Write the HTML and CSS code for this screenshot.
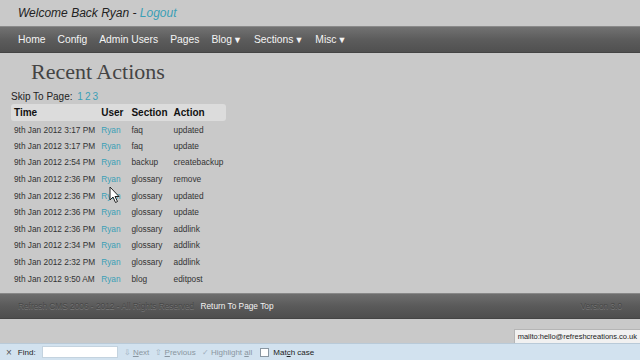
FILE: index.html
```html
<!DOCTYPE html>
<html lang="en">
<head>
    <meta charset="UTF-8">
    <meta name="viewport" content="width=device-width, initial-scale=1.0">
    <title>Refresh CMS - Recent Actions</title>
    <link rel="stylesheet" href="styles.css">
</head>

<body>
    <!-- top welcome line -->
    <div class="welcome">Welcome Back Ryan - <a href="#">Logout</a></div>

    <!-- main menu -->
    <div class="nav">
        <a href="#">Home</a>
        <a href="#">Config</a>
        <a href="#">Admin Users</a>
        <a href="#">Pages</a>
        <a href="#">Blog<span class="arrow">▼</span></a>
        <a href="#">Sections<span class="arrow">▼</span></a>
        <a href="#">Misc<span class="arrow">▼</span></a>
    </div>

    <div class="main">
        <h1>Recent Actions</h1>
        <div class="pager">Skip To Page: <a href="#">1</a><a href="#">2</a><a href="#">3</a></div>

        <table class="actions">
            <tr class="head">
                <th>Time</th>
                <th>User</th>
                <th>Section</th>
                <th>Action</th>
            </tr>
            <tr><td>9th Jan 2012 3:17 PM</td><td><a href="#">Ryan</a></td><td>faq</td><td>updated</td></tr>
            <tr><td>9th Jan 2012 3:17 PM</td><td><a href="#">Ryan</a></td><td>faq</td><td>update</td></tr>
            <tr><td>9th Jan 2012 2:54 PM</td><td><a href="#">Ryan</a></td><td>backup</td><td>createbackup</td></tr>
            <tr><td>9th Jan 2012 2:36 PM</td><td><a href="#">Ryan</a></td><td>glossary</td><td>remove</td></tr>
            <tr><td>9th Jan 2012 2:36 PM</td><td><a href="#">Ryan</a></td><td>glossary</td><td>updated</td></tr>
            <tr><td>9th Jan 2012 2:36 PM</td><td><a href="#">Ryan</a></td><td>glossary</td><td>update</td></tr>
            <tr><td>9th Jan 2012 2:36 PM</td><td><a href="#">Ryan</a></td><td>glossary</td><td>addlink</td></tr>
            <tr><td>9th Jan 2012 2:34 PM</td><td><a href="#">Ryan</a></td><td>glossary</td><td>addlink</td></tr>
            <tr><td>9th Jan 2012 2:32 PM</td><td><a href="#">Ryan</a></td><td>glossary</td><td>addlink</td></tr>
            <tr><td>9th Jan 2012 9:50 AM</td><td><a href="#">Ryan</a></td><td>blog</td><td>editpost</td></tr>
        </table>
    </div>

    <!-- footer -->
    <div class="footer">
        <div class="left">Refresh CMS 2006 - 2012 - All Rights Reserved <a href="#">Return To Page Top</a></div>
        <div class="version">Version 3.0</div>
    </div>

    <!-- browser status + find bar -->
    <div class="status">mailto:hello@refreshcreations.co.uk</div>
    <div class="findbar">
        <span class="close">×</span>
        <span class="label">Find:</span>
        <span class="field"></span>
        <span class="btn"><span class="ico">⇩</span> <u>N</u>ext</span>
        <span class="btn"><span class="ico">⇧</span> <u>P</u>revious</span>
        <span class="btn"><span class="ico">✓</span> Highlight <u>a</u>ll</span>
        <span class="check"></span>
        <span class="match">Mat<u>c</u>h case</span>
    </div>

    <svg class="cursor" width="12" height="18" viewBox="0 0 12 18">
        <path d="M1 1 L1 14 L4 11 L6.5 16.5 L8.5 15.5 L6 10.5 L10 10.5 Z" fill="#fff" stroke="#222" stroke-width="1"/>
    </svg>
</body>
</html>
```

FILE: styles.css
```css
* {
    margin: 0;
    padding: 0;
    box-sizing: border-box;
}

body {
    font-family: "Liberation Sans", Arial, sans-serif;
    background: #c9c9c9;
    color: #333;
    width: 640px;
    height: 360px;
    overflow: hidden;
    position: relative;
}

a {
    color: #3a9fb6;
    text-decoration: none;
}

/* welcome line */
.welcome {
    height: 26px;
    line-height: 26px;
    padding-left: 18px;
    font-size: 12px;
    font-style: italic;
    color: #222;
}

/* menu bar */
.nav {
    height: 27px;
    display: flex;
    align-items: center;
    gap: 12px;
    padding-left: 18px;
    background: linear-gradient(#727272, #5c5c5c 50%, #505050);
    border-top: 1px solid #8a8a8a;
    border-bottom: 1px solid #444;
}

.nav a {
    color: #f4f4f4;
    font-size: 10.3px;
}

.nav .arrow {
    font-size: 9px;
    margin-left: 1px;
}

/* content */
.main {
    padding-left: 11px;
}

.main h1 {
    font-family: "Liberation Serif", "Times New Roman", serif;
    font-weight: normal;
    font-size: 22px;
    color: #444;
    margin-left: 20px;
    line-height: 26px;
    padding-top: 6px;
}

.pager {
    font-size: 10px;
    color: #222;
    margin-top: 5px;
    line-height: 14px;
}

.pager a {
    margin-left: 2px;
}

.actions {
    border-collapse: collapse;
}

.actions th {
    text-align: left;
    font-size: 10px;
    font-weight: bold;
    color: #111;
    height: 17px;
    padding: 0 3px;
    background: #dcdcdc;
}

.actions th:first-child {
    border-radius: 3px 0 0 3px;
}

.actions th:last-child {
    border-radius: 0 3px 3px 0;
    padding-right: 6px;
}

.actions td {
    font-size: 8.3px;
    color: #333;
    height: 16.6px;
    padding: 0 3px;
    white-space: nowrap;
}

.actions th:nth-child(2),
.actions td:nth-child(2) {
    padding-right: 5px;
}

.actions tr:nth-child(2) td {
    padding-top: 2px;
}

/* footer */
.footer {
    height: 26px;
    margin-top: 6px;
    display: flex;
    align-items: center;
    justify-content: space-between;
    padding: 0 18px;
    background: linear-gradient(#6e6e6e, #5a5a5a 50%, #4e4e4e);
    border-top: 1px solid #888;
    border-bottom: 1px solid #444;
    font-size: 8.3px;
    color: #484848;
    text-shadow: 0 1px 0 #777;
}

.footer a {
    color: #f2f2f2;
    margin-left: 4px;
    text-shadow: none;
}

/* browser chrome overlays */
.status {
    position: absolute;
    right: 0;
    bottom: 17px;
    height: 14px;
    line-height: 13px;
    padding: 0 3px;
    font-size: 7.5px;
    color: #222;
    background: #f1f1f1;
    border: 1px solid #b5b5b5;
    border-right: none;
    border-bottom: none;
}

.findbar {
    position: absolute;
    left: 0;
    bottom: 0;
    width: 640px;
    height: 17px;
    display: flex;
    align-items: center;
    padding-left: 6px;
    background: #d2e2ef;
    border-top: 1px solid #b9cad8;
    font-size: 8px;
    color: #222;
}

.findbar .close {
    font-size: 10px;
    color: #555;
    margin-right: 6px;
}

.findbar .field {
    width: 76px;
    height: 12px;
    background: #fff;
    border: 1px solid #c4d3df;
    margin: 0 6px 0 6px;
}

.findbar .btn {
    color: #8a96a0;
    margin-right: 6px;
}

.findbar .ico {
    color: #9fb0be;
}

.findbar .check {
    width: 9px;
    height: 9px;
    background: #fff;
    border: 1px solid #8a97a2;
    margin: 0 4px 0 2px;
}

.cursor {
    position: absolute;
    left: 109px;
    top: 186px;
}
```
